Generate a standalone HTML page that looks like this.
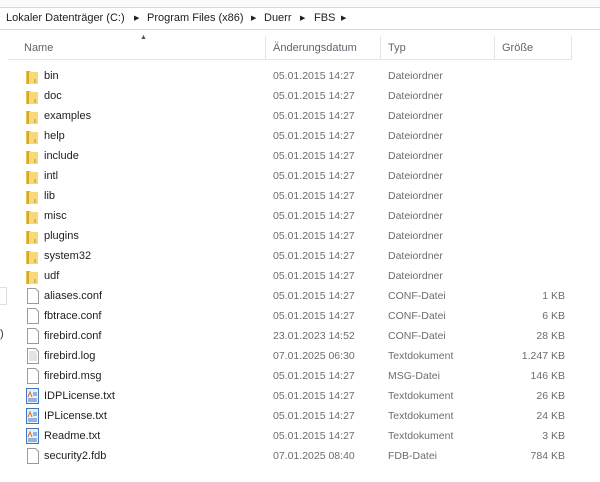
<!DOCTYPE html>
<html><head><meta charset="utf-8"><style>
body{margin:0;width:600px;height:482px;background:#fff;font-family:"Liberation Sans",sans-serif;font-size:10.5px;position:relative;overflow:hidden}
.top{position:absolute;left:0;top:0;width:600px;height:7px;background:#fafafa;border-bottom:1px solid #d9d9d9}
.addr{position:absolute;left:0;top:8px;width:600px;height:21px;border-bottom:1px solid #d9d9d9;color:#1e1e1e;font-size:11px;line-height:21px}
.addr span{position:absolute;top:0}
.tri{font-size:7px}
.hdr{position:absolute;top:36px;height:24px;line-height:24px;color:#5f6670;font-size:11px;border-right:1px solid #e5e5e5;border-bottom:1px solid #e5e5e5;box-sizing:border-box;padding-left:7px}
.row{position:absolute;left:0;height:20px;line-height:20px;width:600px}
.row div{position:absolute;top:0}
.n{left:44px;color:#1e1e1e;font-size:11px}
.d{left:273px;color:#6d6d6d}
.t{left:388px;color:#6d6d6d}
.s{right:35px;color:#6d6d6d;text-align:right}
</style></head><body>
<div class="top"></div>
<div class="addr">
<span style="left:6px">Lokaler Datenträger (C:)</span><span class="tri" style="left:134px">▶</span>
<span style="left:147px">Program Files (x86)</span><span class="tri" style="left:251px">▶</span>
<span style="left:264px">Duerr</span><span class="tri" style="left:300px">▶</span>
<span style="left:314px">FBS</span><span class="tri" style="left:341px">▶</span>
</div>
<div style="position:absolute;left:140px;top:34px;font-size:7px;color:#555">▲</div>
<div class="hdr" style="left:8px;width:258px;padding-left:16px">Name</div>
<div class="hdr" style="left:266px;width:115px">Änderungsdatum</div>
<div class="hdr" style="left:381px;width:114px">Typ</div>
<div class="hdr" style="left:495px;width:77px">Größe</div>
<div style="position:absolute;left:0;top:287px;width:6px;height:16px;border:1px solid #ddd;border-left:none"></div>
<div style="position:absolute;left:0;top:328px;font-size:11px;color:#333">)</div>
<div id="rows"></div>
<script>
var F='<svg viewBox="0 0 12 15" style="position:absolute;left:26px;top:3px" width="12" height="15"><path d="M0 2h4l1 1h7v12H0z" fill="#e8c04a"/><path d="M3 3h9v12H3z" fill="#f7d977"/><path d="M1 2h2v13H1z" fill="#d9a52a"/><path d="M9 10v4" stroke="#b8942e"/></svg>';
var D='<svg viewBox="0 0 12 16" style="position:absolute;left:27px;top:2px" width="12" height="16"><path d="M.5.5h8l3 3v12h-11z" fill="#fff" stroke="#9a9a9a"/></svg>';
var L='<svg viewBox="0 0 12 16" style="position:absolute;left:27px;top:2px" width="12" height="16"><path d="M.5.5h8l3 3v12h-11z" fill="#fff" stroke="#9a9a9a"/><path d="M2 4h7M2 6h8M2 8h8M2 10h8M2 12h8" stroke="#c8c8c8"/></svg>';
var T='<svg viewBox="0 0 13 16" style="position:absolute;left:26px;top:2px" width="13" height="16"><rect x=".5" y=".5" width="12" height="15" fill="#e8f1fb" stroke="#3f78c2"/><path d="M2 9l2-5 2 5" stroke="#e06a1a" fill="none"/><path d="M7 5h4M7 7h4M2 11h9M2 13h9" stroke="#3f78c2"/></svg>';
var r=[["bin","05.01.2015 14:27","Dateiordner","",F],["doc","05.01.2015 14:27","Dateiordner","",F],["examples","05.01.2015 14:27","Dateiordner","",F],["help","05.01.2015 14:27","Dateiordner","",F],["include","05.01.2015 14:27","Dateiordner","",F],["intl","05.01.2015 14:27","Dateiordner","",F],["lib","05.01.2015 14:27","Dateiordner","",F],["misc","05.01.2015 14:27","Dateiordner","",F],["plugins","05.01.2015 14:27","Dateiordner","",F],["system32","05.01.2015 14:27","Dateiordner","",F],["udf","05.01.2015 14:27","Dateiordner","",F],["aliases.conf","05.01.2015 14:27","CONF-Datei","1 KB",D],["fbtrace.conf","05.01.2015 14:27","CONF-Datei","6 KB",D],["firebird.conf","23.01.2023 14:52","CONF-Datei","28 KB",D],["firebird.log","07.01.2025 06:30","Textdokument","1.247 KB",L],["firebird.msg","05.01.2015 14:27","MSG-Datei","146 KB",D],["IDPLicense.txt","05.01.2015 14:27","Textdokument","26 KB",T],["IPLicense.txt","05.01.2015 14:27","Textdokument","24 KB",T],["Readme.txt","05.01.2015 14:27","Textdokument","3 KB",T],["security2.fdb","07.01.2025 08:40","FDB-Datei","784 KB",D]];
var h='';r.forEach(function(x,i){h+='<div class="row" style="top:'+(66+i*20)+'px">'+x[4]+'<div class="n">'+x[0]+'</div><div class="d">'+x[1]+'</div><div class="t">'+x[2]+'</div><div class="s">'+x[3]+'</div></div>';});
document.getElementById('rows').innerHTML=h;
</script>
</body></html>
